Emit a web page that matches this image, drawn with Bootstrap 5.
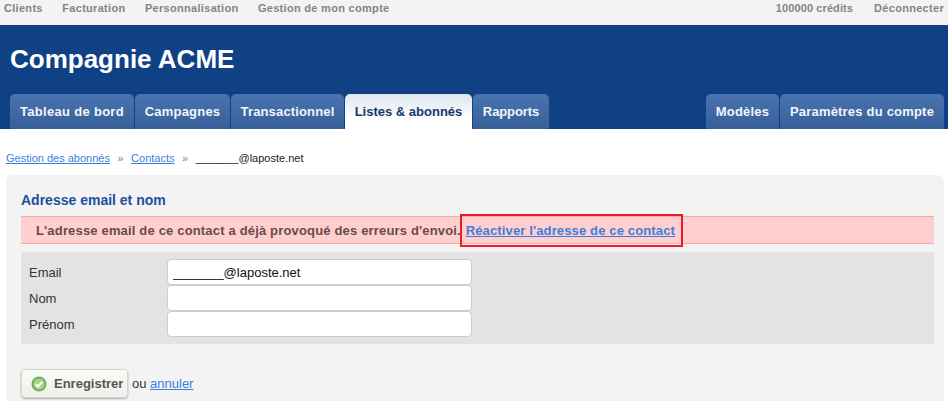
<!DOCTYPE html>
<html lang="fr">
<head>
  <meta charset="UTF-8">
  <title>Compagnie ACME | Contact</title>
  <meta name="viewport" content="width=device-width, initial-scale=1">
  <link href="https://cdn.jsdelivr.net/npm/bootstrap@5.3.3/dist/css/bootstrap.min.css" rel="stylesheet">
  <style>
    html, body { height: 401px; overflow: hidden; }
    body {
      background: #fff;
      font-family: "Liberation Sans", Arial, sans-serif;
      font-size: 13px;
      color: #333;
    }
    a { color: #3b7fdc; }
    .top-bar {
      height: 25px;
      background: #f3f3f3;
      padding: 0 4px;
      font-size: 11px;
      font-weight: 700;
      letter-spacing: .3px;
      line-height: 16px;
    }
    .top-bar a { color: #8a8280; text-decoration: none; }
    .top-left { gap: 19.5px; }
    .top-right { gap: 21px; }
    .top-credits { letter-spacing: .1px; }
    .site-head {
      height: 104px;
      background: #104184;
      padding: 0 4px 0 10px;
    }
    .site-title {
      margin: 0;
      padding-top: 17px;
      height: 69px;
      color: #fff;
      font-size: 26px;
      font-weight: 700;
      line-height: 34px;
    }
    .tab-row { gap: 1px; }
    .tab-link {
      display: block;
      height: 35px;
      line-height: 35px;
      text-align: center;
      font-size: 13px;
      font-weight: 700;
      letter-spacing: .2px;
      color: #f2f5fa;
      text-decoration: none;
      border-radius: 5px 5px 0 0;
      background: linear-gradient(#4a74b0, #375f99);
    }
    .tab-link.is-current {
      color: #16396b;
      background: linear-gradient(#dde5f0, #fff 70%);
    }
    /* tab widths read off the reference */
    .tab-board { width: 124px; letter-spacing: .3px; }
    .tab-camp { width: 95px; }
    .tab-trans { width: 113px; letter-spacing: .15px; }
    .tab-lists { width: 127px; letter-spacing: 0; }
    .tab-reports { width: 76px; letter-spacing: -.1px; }
    .tab-models { width: 73px; }
    .tab-settings { width: 164px; }
    .crumbs {
      padding: 23px 0 0 6px;
      height: 46px;
      font-size: 11px;
      line-height: 13px;
      color: #222;
      gap: 7.5px;
    }
    .crumb-sep { color: #9a7a62; }
    .main-panel {
      margin: 0 4px 0 6px;
      height: 240px;
      padding: 15px 10px 0 15px;
      background: #f3f3f3;
      border-radius: 6px 6px 0 0;
    }
    .panel-title {
      margin: 0 0 6px;
      font-size: 14px;
      font-weight: 700;
      line-height: 20px;
      color: #1d4f9f;
    }
    .warn-bar {
      height: 28px;
      padding-left: 15px;
      background: #ffcfcf;
      border-top: 1px solid #f5a9a9;
      border-bottom: 1px solid #f5a9a9;
      font-size: 13px;
      font-weight: 700;
      letter-spacing: .17px;
      line-height: 27px;
      color: #6b4a4a;
    }
    .warn-link { margin-left: 1px; letter-spacing: .14px; }
    .warn-box {
      position: absolute;
      top: -3px;
      bottom: -3px;
      left: -6px;
      right: -8px;
      border: 2px solid #ed1c24;
    }
    .form-zone {
      margin-top: 8px;
      height: 92px;
      padding: 7px 8px;
      background: #e3e3e3;
    }
    .form-line { height: 26px; color: #333; }
    .form-line label { width: 138px; padding-top: 1px; }
    .text-field {
      width: 305px;
      height: 26px;
      padding: 0 5px;
      font-size: 13px;
      color: #111;
      background: #fff;
      border: 1px solid #ccc;
      border-radius: 4px;
      font-family: inherit;
    }
    .actions { margin-top: 25px; gap: 4px; }
    .save-btn {
      height: 29px;
      width: 107px;
      padding: 0 0 0 9px;
      gap: 7px;
      font-size: 13px;
      font-weight: 700;
      color: #555;
      background: linear-gradient(#fbfbf8, #eeeeea);
      border: 1px solid #d5d5d0;
      border-radius: 4px;
      box-shadow: 0 1px 2px rgba(0,0,0,.3);
    }
  </style>
</head>
<body>

  <!-- Top links -->
  <div class="top-bar d-flex justify-content-between">
    <div class="top-left d-flex">
      <a href="#">Clients</a>
      <a href="#">Facturation</a>
      <a href="#">Personnalisation</a>
      <a href="#">Gestion de mon compte</a>
    </div>
    <div class="top-right d-flex">
      <a class="top-credits" href="#">100000 crédits</a>
      <a href="#">Déconnecter</a>
    </div>
  </div>

  <!-- Header and tabs -->
  <div class="site-head">
    <h1 class="site-title">Compagnie ACME</h1>
    <div class="d-flex justify-content-between">
      <div class="tab-row d-flex">
        <a class="tab-link tab-board" href="#">Tableau de bord</a>
        <a class="tab-link tab-camp" href="#">Campagnes</a>
        <a class="tab-link tab-trans" href="#">Transactionnel</a>
        <a class="tab-link tab-lists is-current" href="#">Listes &amp; abonnés</a>
        <a class="tab-link tab-reports" href="#">Rapports</a>
      </div>
      <div class="tab-row d-flex">
        <a class="tab-link tab-models" href="#">Modèles</a>
        <a class="tab-link tab-settings" href="#">Paramètres du compte</a>
      </div>
    </div>
  </div>

  <!-- Breadcrumb -->
  <div class="crumbs d-flex">
    <a href="#">Gestion des abonnés</a>
    <span class="crumb-sep">»</span>
    <a href="#">Contacts</a>
    <span class="crumb-sep">»</span>
    <span>_______@laposte.net</span>
  </div>

  <!-- Contact panel -->
  <div class="main-panel">
    <h2 class="panel-title">Adresse email et nom</h2>
    <div class="warn-bar">
      L'adresse email de ce contact a déjà provoqué des erreurs d'envoi.
      <span class="warn-link position-relative d-inline-block">
        <a href="#">Réactiver l'adresse de ce contact</a>
        <span class="warn-box"></span>
      </span>
    </div>
    <form class="form-zone">
      <div class="form-line d-flex align-items-center">
        <label for="email">Email</label>
        <input class="text-field" id="email" type="text" value="_______@laposte.net">
      </div>
      <div class="form-line d-flex align-items-center">
        <label for="nom">Nom</label>
        <input class="text-field" id="nom" type="text">
      </div>
      <div class="form-line d-flex align-items-center">
        <label for="prenom">Prénom</label>
        <input class="text-field" id="prenom" type="text">
      </div>
    </form>
    <div class="actions d-flex align-items-center">
      <button class="save-btn d-flex align-items-center" type="button">
        <svg width="16" height="16" viewBox="0 0 16 16" aria-hidden="true">
          <circle cx="8" cy="8" r="7.5" fill="#6fb04f"/>
          <circle cx="8" cy="8" r="5.5" fill="#a5d68a"/>
          <path d="M4.8 8.2l2.3 2.3 4.2-4.6" fill="none" stroke="#fff" stroke-width="2"/>
        </svg>
        Enregistrer
      </button>
      <span>ou <a href="#">annuler</a></span>
    </div>
  </div>

</body>
</html>
